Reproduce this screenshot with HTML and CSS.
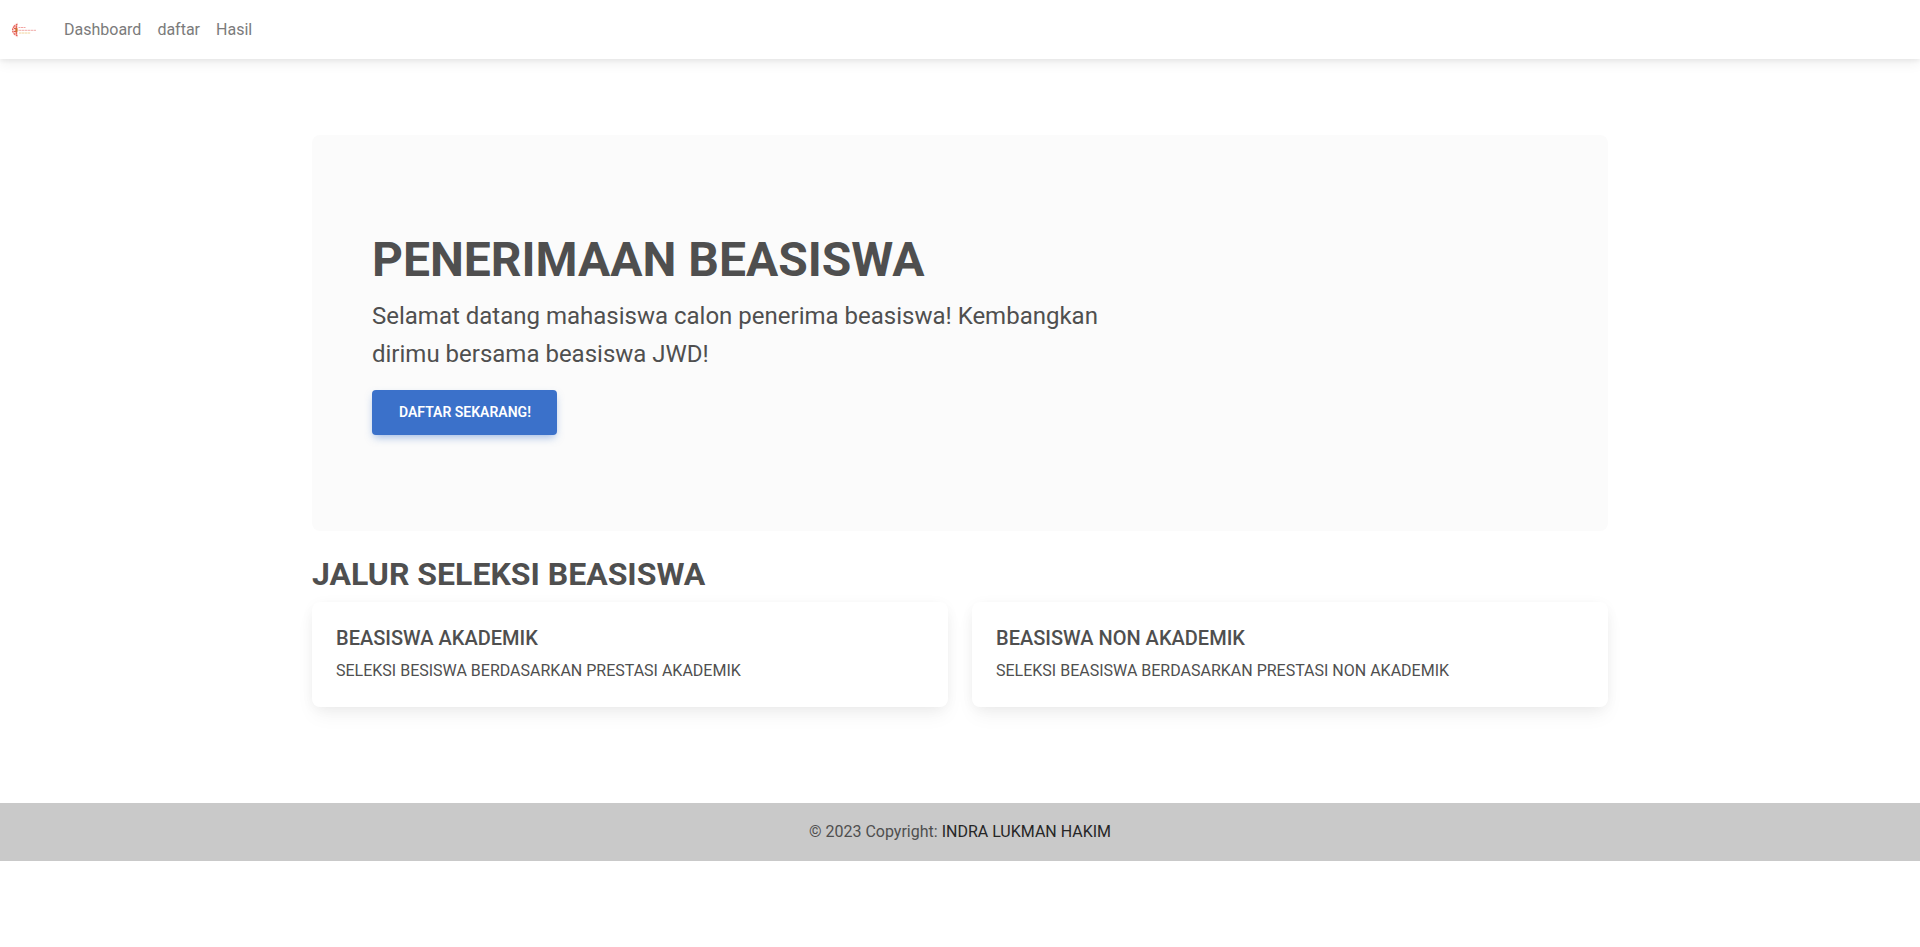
FILE: index.html
```html
<!DOCTYPE html>
<html lang="id">
<head>
<meta charset="utf-8">
<title>Penerimaan Beasiswa</title>
<link rel="stylesheet" href="styles.css">
</head>
<body>
<nav class="navbar">
  <a class="brand" href="#" aria-label="Logo">
    <svg class="logo" width="26" height="16" viewBox="0 0 26 16">
      <path d="M7 .5C4 1.500 1 4 1 8s3 6.500 6 7.500z" fill="#f3a19b" opacity=".35"/>
      <g fill="none" stroke="#e4574c" stroke-width="1.200">
        <path d="M6.300 2.200L3 4.200M6.300 13.800L3 11.800" stroke-dasharray="1.500 .9"/>
        <path d="M3.300 4.400C1.100 6 1.100 10 3.300 11.600" stroke-dasharray="1.700 .8"/>
        <path d="M3 6.500h2.500M3 9.500h2.500M5.300 3.600v9" />
      </g>
      <path d="M4.500 6.300h2v3.400h-2z" fill="#c8742b"/>
      <path d="M7.500 5.500h7" stroke="#f2a5a3" stroke-width="1" stroke-dasharray="2 .5"/>
      <path d="M7.500 8.300H25" stroke="#f0aaa8" stroke-width="1" stroke-dasharray="2.500 .5"/>
      <path d="M8 11H19.500" stroke="#f0d49c" stroke-width="1" stroke-dasharray="2.500 .4"/>
    </svg>
  </a>
  <div class="nav-links">
    <a href="#">Dashboard</a>
    <a href="#">daftar</a>
    <a href="#">Hasil</a>
  </div>
</nav>
<main class="container">
  <section class="hero">
    <h1>PENERIMAAN BEASISWA</h1>
    <p>Selamat datang mahasiswa calon penerima beasiswa! Kembangkan dirimu bersama beasiswa JWD!</p>
    <a class="button" href="#">DAFTAR SEKARANG!</a>
  </section>
  <h2>JALUR SELEKSI BEASISWA</h2>
  <section class="cards">
    <article class="card">
      <h5>BEASISWA AKADEMIK</h5>
      <p>SELEKSI BESISWA BERDASARKAN PRESTASI AKADEMIK</p>
    </article>
    <article class="card">
      <h5>BEASISWA NON AKADEMIK</h5>
      <p>SELEKSI BEASISWA BERDASARKAN PRESTASI NON AKADEMIK</p>
    </article>
  </section>
</main>
<footer class="footer">© 2023 Copyright: <a href="#">INDRA LUKMAN HAKIM</a></footer>
</body>
</html>
```
FILE: styles.css
```css
* { box-sizing: border-box; }
body {
  margin: 0;
  font: 400 16px/1.6 Roboto, sans-serif;
  color: #4f4f4f;
  background: #fff;
}
a { text-decoration: none; }
h1, h2, h5 { margin: 0 0 8px; line-height: 1.2; }

.navbar {
  display: flex;
  align-items: center;
  height: 59px;
  padding-left: 11px;
  background: #fff;
  box-shadow: 0 4px 12px 0 rgba(0, 0, 0, .07), 0 2px 4px rgba(0, 0, 0, .05);
}
.brand { display: flex; }
.logo { display: block; }
.nav-links { display: flex; gap: 16px; margin-left: 27px; }
.nav-links a { color: #7b7b7b; }

.container { width: 1296px; margin: 0 auto; padding: 76.2px 0 96px; }

.hero {
  padding: 96px 60px;
  margin-bottom: 24px;
  border-radius: 8px;
  background: #fbfbfb;
}
.hero h1 { font-size: 48px; font-weight: 700; }
.hero p { width: 760px; margin: 0 0 16px; font-size: 24px; }
.button {
  display: block;
  width: 185px;
  padding: 12px 0 12px 27px;
  border-radius: 4px;
  background: #3b71ca;
  box-shadow: 0 4px 9px -2px rgba(59, 113, 202, .5);
  color: #fff;
  font-size: 14px;
  font-weight: 600;
  line-height: 21px;
}

h2 { margin-bottom: 8.6px; font-size: 32px; font-weight: 700; }
.cards { display: grid; grid-template-columns: 1fr 1fr; gap: 24px; }
.card {
  padding: 24px;
  border-radius: 8px;
  background: #fff;
  box-shadow: 0 2px 15px -3px rgba(0, 0, 0, .07), 0 10px 20px -2px rgba(0, 0, 0, .05);
}
.card h5 { font-size: 20px; font-weight: 500; }
.card p { margin: 0; }

.footer { padding: 16px; text-align: center; background: #c9c9c9; }
.footer a { color: #262626; }
```
